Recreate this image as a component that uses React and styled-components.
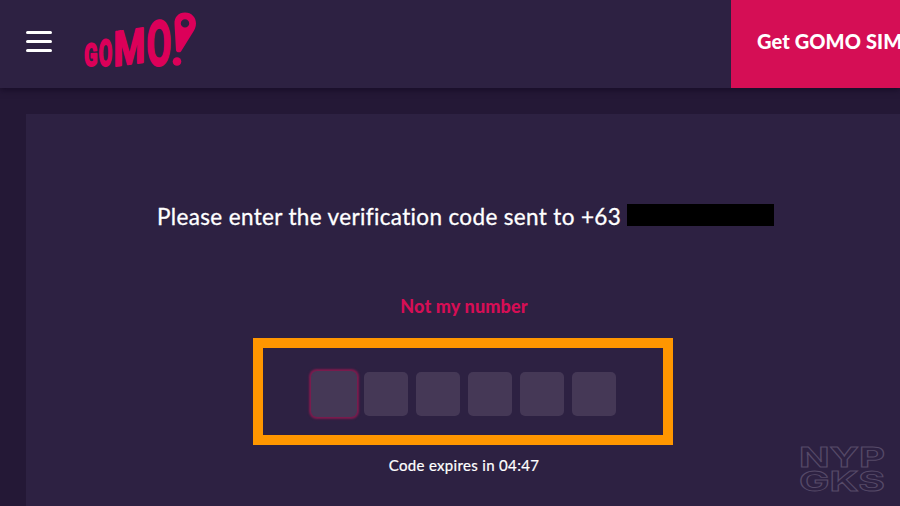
import styled, { createGlobalStyle } from 'styled-components';

const COLORS = {
  Page: '#241836',
  Surface: '#2d2142',
  Field: '#453856',
  Pink: '#d50e55',
  LogoPink: '#dc0059',
  Orange: '#ff9600',
  Watermark: '#564a68',
};

const LOGO_LETTERS = [
  { char: 'G', x: 85, width: 11.5, height: 22, tilt: -4 },
  { char: 'O', x: 99.5, width: 12, height: 26, tilt: -3 },
  { char: 'M', x: 115.5, width: 27.5, height: 34.5, tilt: -8 },
  { char: 'O', x: 148, width: 22, height: 45, tilt: -3 },
];

const GLYPH_BOX = {
  G: { left: 0.04, width: 0.59 },
  O: { left: 0.04, width: 0.61 },
  M: { left: 0.058, width: 0.76 },
};

function LogoLetter({ char, x, width, height, tilt }) {
  const box = GLYPH_BOX[char];
  const sx = width / (box.width * 20);
  const sy = height / (0.72 * 20);

  return (
    <text
      transform={`translate(${x - 84} 56) skewY(${tilt}) scale(${sx} ${sy})`}
      x={-box.left * 20}
      y="0"
    >
      {char}
    </text>
  );
}

function Logo() {
  return (
    <LogoImage viewBox="0 0 114 60" role="img" aria-label="GOMO">
      {LOGO_LETTERS.map((letter) => (
        <LogoLetter key={letter.x} {...letter} />
      ))}
      <path
        fillRule="evenodd"
        d="M101 2.5C107.500 2.500 112 7.200 112 13.500C112 17 110.500 20 108.500 23L97 41.500C96 43 92.500 42.500 92 40.500L90.500 14C90.200 7.200 94.500 2.500 101 2.500ZM101 9.200A4.200 4.200 0 1 0 101 17.600A4.200 4.200 0 1 0 101 9.200Z"
      />
      <circle cx="93" cy="51.500" r="4.300" />
    </LogoImage>
  );
}

function App() {
  return (
    <>
      <GlobalStyle />
      <Page>
        <Header>
          <MenuButton aria-label="Menu">
            <MenuLine />
            <MenuLine />
            <MenuLine />
          </MenuButton>
          <Logo />
          <SimButton>Get GOMO SIM</SimButton>
        </Header>

        <Panel>
          <Prompt>
            <span>Please enter the verification code sent to +63</span>
            <HiddenNumber />
          </Prompt>
          <NumberLink>Not my number</NumberLink>
          <CodeFrame>
            {[0, 1, 2, 3, 4, 5].map((digit) => (
              <CodeField key={digit} $active={digit === 0} />
            ))}
          </CodeFrame>
          <Expiry>Code expires in 04:47</Expiry>
        </Panel>

        <Watermark viewBox="0 0 88 48" aria-hidden="true">
          <text x="0" y="21.500" textLength="86" lengthAdjust="spacingAndGlyphs">
            NYP
          </text>
          <text x="0" y="45.500" textLength="86" lengthAdjust="spacingAndGlyphs">
            GKS
          </text>
        </Watermark>
      </Page>
    </>
  );
}

const GlobalStyle = createGlobalStyle`
  *,
  *::before,
  *::after {
    box-sizing: border-box;
  }

  body {
    margin: 0;
    overflow: hidden;
    background: ${COLORS.Page};
  }
`;

const Page = styled.div`
  position: relative;
  display: flex;
  flex-direction: column;
  gap: 26px;
  height: 100vh;
  overflow: hidden;

  color: white;
  font-family: Lato, 'Liberation Sans', sans-serif;
  font-variant-ligatures: none;
`;

const Header = styled.header`
  display: flex;
  align-items: center;
  flex: 0 0 88px;
  padding-left: 26px;

  background: ${COLORS.Surface};
  box-shadow: 0 2px 6px rgba(15, 5, 30, 0.6);
`;

const MenuButton = styled.button`
  display: flex;
  flex-direction: column;
  gap: 6px;
  width: 26px;
  margin-top: -5px;
  padding: 0;

  background: none;
  border: none;
`;

const MenuLine = styled.span`
  height: 3px;
  border-radius: 1.5px;

  background: white;
`;

const LogoImage = styled.svg`
  width: 114px;
  height: 60px;
  margin: -8px 0 0 32px;
  overflow: visible;

  fill: ${COLORS.LogoPink};
  font-family: Roboto, sans-serif;
  font-size: 20px;
  font-weight: 700;

  text {
    stroke: ${COLORS.LogoPink};
    stroke-width: 1.8px;
    stroke-linejoin: round;
    vector-effect: non-scaling-stroke;
  }
`;

const SimButton = styled.button`
  flex: 0 0 195px;
  align-self: stretch;
  margin-left: auto;
  margin-right: -26px;
  padding: 0 0 6px 26px;

  background: ${COLORS.Pink};
  border: none;
  color: white;
  font-family: inherit;
  font-size: 20px;
  font-weight: 900;
  letter-spacing: 0.1px;
  text-align: left;
  white-space: nowrap;
`;

const Panel = styled.main`
  display: flex;
  flex: 1;
  flex-direction: column;
  align-items: center;
  margin: 0 -2px 0 26px;
  padding-top: 89px;

  background: ${COLORS.Surface};
`;

const Prompt = styled.p`
  display: flex;
  width: 617px;
  margin: 0 0 65px 3px;

  font-size: 22.5px;
  letter-spacing: 0.35px;
  line-height: 28px;
  white-space: nowrap;
  -webkit-text-stroke: 0.3px white;
`;

const HiddenNumber = styled.span`
  width: 147px;
  height: 22px;
  margin: 1px 0 0 auto;

  background: black;
`;

const NumberLink = styled.a`
  margin-bottom: 22px;

  color: ${COLORS.Pink};
  font-size: 18px;
  font-weight: 900;
  letter-spacing: 0.15px;
  line-height: 20px;
`;

const CodeFrame = styled.div`
  display: flex;
  align-items: center;
  justify-content: center;
  gap: 8px;
  width: 420px;
  height: 107px;
  margin-right: 2px;
  padding: 4px 0 0 2px;

  border: 10px solid ${COLORS.Orange};
`;

const CodeField = styled.div`
  width: 44px;
  height: 44px;
  border-radius: 5px;

  background: ${COLORS.Field};
  box-shadow: ${({ $active }) =>
    $active
      ? `0 0 0 1px ${COLORS.Field}, 0 0 2px 3px rgba(160, 24, 82, 0.7)`
      : 'none'};
`;

const Expiry = styled.p`
  margin: 10px 0 0;

  font-size: 15px;
  letter-spacing: 0.33px;
  line-height: 20px;
  -webkit-text-stroke: 0.2px white;
`;

/* Lies over the lower right corner of the panel */
const Watermark = styled.svg`
  position: absolute;
  right: 13px;
  bottom: 13px;
  width: 88px;
  height: 48px;
  overflow: visible;

  fill: none;
  stroke: ${COLORS.Watermark};
  stroke-width: 0.9px;
  font-family: Inter, sans-serif;
  font-size: 27px;
  font-weight: 700;
`;

export default App;
